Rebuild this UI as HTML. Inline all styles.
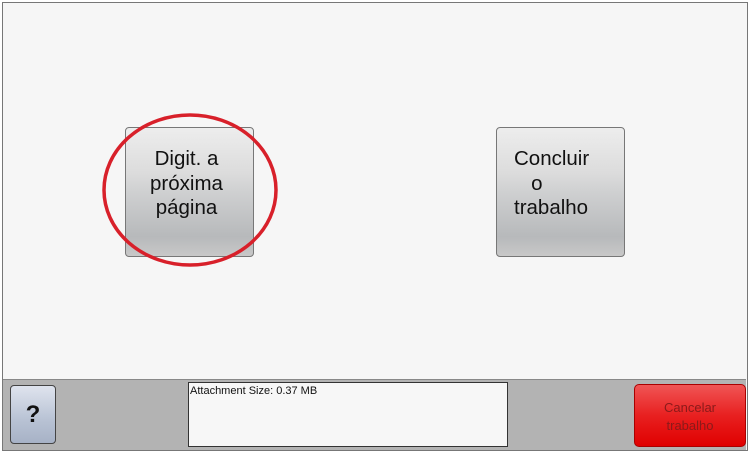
<!DOCTYPE html>
<html><head><style>
body{margin:0;width:750px;height:453px;overflow:hidden;background:#fff;font-family:"Liberation Sans",sans-serif;position:relative}
.frame{position:absolute;left:2px;top:2px;width:744px;height:447px;border:1px solid #777;background:#f6f6f6}
.bar{position:absolute;left:3px;top:379px;width:743px;height:70px;background:#b3b3b3;border-top:1px solid #888}
.btn{position:absolute;width:129px;height:130px;border:1px solid #777;border-radius:4px;background:linear-gradient(#ededed 0%,#dcdcdc 35%,#cfd0d1 50%,#b7b9bb 85%,#c8c8c8 100%);font-size:20.5px;color:#111;text-align:center;box-sizing:border-box;line-height:24.5px;padding-top:19px}
</style></head><body>
<div class="frame"></div>
<div class="btn" style="left:125px;top:127px;padding-right:6px">Digit. a<br>próxima<br>página</div>
<div class="btn" style="left:496px;top:127px;text-align:left;padding-left:17px">Concluir<br>&nbsp;&nbsp;&nbsp;o<br>trabalho</div>
<svg style="position:absolute;left:0;top:0" width="750" height="453"><ellipse cx="190" cy="190" rx="86" ry="75" fill="none" stroke="#d8202a" stroke-width="3.5"/></svg>
<div class="bar"></div>
<div style="position:absolute;left:10px;top:385px;width:46px;height:59px;box-sizing:border-box;border:1px solid #444;border-radius:4px;background:linear-gradient(#dfe4ee,#b8c2d4 60%,#a7b2c6);font-weight:bold;font-size:24px;text-align:center;line-height:57px;color:#111">?</div>
<div style="position:absolute;left:188px;top:382px;width:320px;height:65px;box-sizing:border-box;border:1px solid #333;background:#f7f7f7;font-size:11px;padding:2px 1px;color:#111">Attachment Size: 0.37 MB</div>
<div style="position:absolute;left:634px;top:384px;width:112px;height:63px;box-sizing:border-box;border:1px solid #a00;border-radius:5px;background:linear-gradient(#f05555,#e82020 50%,#e00000);color:#8a1a1a;font-size:13px;text-align:center;padding-top:14px;line-height:18px">Cancelar<br>trabalho</div>
</body></html>
